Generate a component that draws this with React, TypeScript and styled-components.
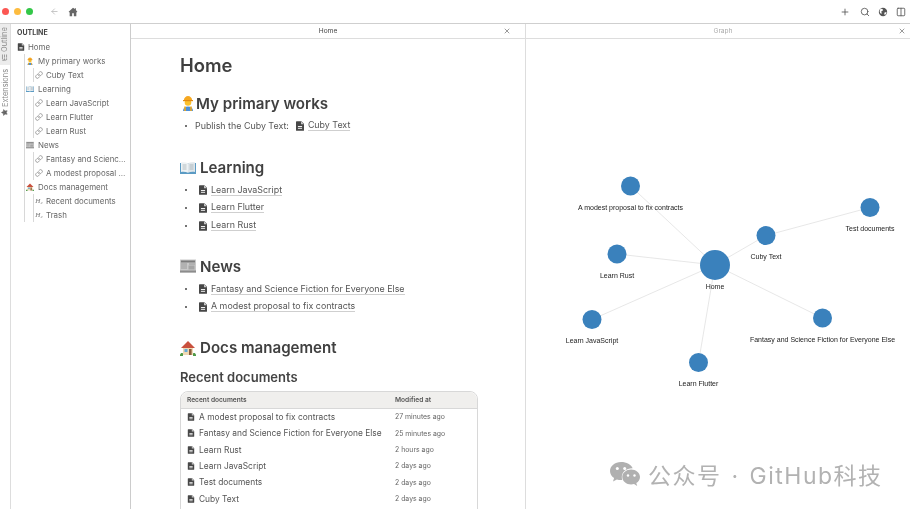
import React from "react";
import styled, { createGlobalStyle } from "styled-components";
import { ArrowLeft, Plus, Search, X, Link as LinkIcon, Columns2, Star, ListTree } from "lucide-react";

const GlobalStyle = createGlobalStyle`
  html, body { margin: 0; padding: 0; background: #fff; }
  body { font-family: Inter, "Noto Sans CJK SC", sans-serif; color: #4a4a4a; }
`;

const Page = styled.div`
  position: relative;
  width: 910px;
  height: 509px;
  overflow: hidden;
  display: flex;
  flex-direction: column;
  will-change: opacity;
`;

const TitleBar = styled.header`
  height: 23px;
  flex: none;
  display: flex;
  align-items: center;
  padding: 0 4px 0 2px;
  border-bottom: 1px solid #cfcfcf;
`;

const Light = styled.span<{ $color: string }>`
  width: 7px;
  height: 7px;
  border-radius: 50%;
  margin-right: 5px;
  background: ${(p) => p.$color};
`;

const NavGroup = styled.div`
  display: flex;
  align-items: center;
  gap: 9px;
  margin-left: 12px;
`;

const Actions = styled.div`
  margin-left: auto;
  display: flex;
  align-items: center;
  gap: 8px;
  color: #555;
`;

const PlusWrap = styled.span`
  display: flex;
  margin-right: 2px;
`;

const Body = styled.div`
  flex: 1;
  min-height: 0;
  display: flex;
`;

const Rail = styled.nav`
  width: 10px;
  flex: none;
  border-right: 1px solid #ddd;
  display: flex;
  flex-direction: column;
`;

const RailTab = styled.div<{ $active?: boolean; $h: number }>`
  height: ${(p) => p.$h}px;
  background: ${(p) => (p.$active ? "#ececec" : "transparent")};
  display: flex;
  align-items: center;
  justify-content: center;
  gap: 2px;
  writing-mode: vertical-rl;
  transform: rotate(180deg);
  font-size: 7.4px;
  color: #8a8a8a;
  margin-bottom: 3px;
`;

const RailIcon = styled.span`
  display: flex;
  color: #666;
  transform: rotate(90deg);
`;

const Sidebar = styled.aside`
  width: 120px;
  flex: none;
  border-right: 1px solid #ccc;
  padding: 3px 3px 0 6px;
  box-sizing: border-box;
  overflow: hidden;
`;

const SideTitle = styled.div`
  font-size: 7px;
  font-weight: 700;
  color: #444;
  height: 13px;
  line-height: 11px;
`;

const SideRow = styled.div<{ $gap?: number }>`
  height: 14px;
  display: flex;
  align-items: center;
  gap: ${(p) => p.$gap ?? 3}px;
  font-size: 7.9px;
  color: #666;
  white-space: nowrap;
  min-width: 0;
`;

const SideLabel = styled.span`
  overflow: hidden;
  text-overflow: ellipsis;
  min-width: 0;
`;

const Guide = styled.div<{ $indent: number }>`
  margin-left: ${(p) => p.$indent}px;
  border-left: 1px solid #d8d8d8;
  padding-left: 1px;
`;

const HeadMark = styled.i`
  width: 8px;
  flex: none;
  font-family: "Liberation Serif", serif;
  font-size: 7px;
  color: #777;
  text-align: center;
`;

const LinkMark = styled(LinkIcon)`
  flex: none;
  color: #777;
`;

const Pane = styled.section<{ $w: number }>`
  width: ${(p) => p.$w}px;
  flex: none;
  display: flex;
  flex-direction: column;
  min-height: 0;
  border-right: 1px solid #ddd;
  &:last-of-type { border-right: 0; }
`;

const TabBar = styled.div<{ $shift?: number }>`
  position: relative;
  height: 14px;
  flex: none;
  border-bottom: 1px solid #ddd;
  display: flex;
  align-items: center;
  justify-content: center;
  padding-left: ${(p) => p.$shift ?? 0}px;
  font-size: 6.6px;
`;

const TabTitle = styled.span<{ $dim?: boolean }>`
  color: ${(p) => (p.$dim ? "#aaa" : "#444")};
`;

const TabClose = styled.span<{ $right: number }>`
  position: absolute;
  right: ${(p) => p.$right}px;
  top: 3px;
  display: flex;
  color: #666;
`;

const Doc = styled.article`
  flex: 1;
  min-height: 0;
  overflow: hidden;
  padding: 14px 48px 0 49px;
`;

const H1 = styled.h1`
  margin: 0 0 14px;
  font-size: 18.4px;
  line-height: 24px;
  font-weight: 600;
  color: #3f3f3f;
`;

const H2 = styled.h2<{ $gap?: number }>`
  margin: 0 0 2px;
  height: 24px;
  display: flex;
  align-items: center;
  gap: ${(p) => p.$gap ?? 4}px;
  font-size: 15.1px;
  font-weight: 600;
  color: #404040;
`;

const Section = styled.section<{ $after: number }>`
  margin-bottom: ${(p) => p.$after}px;
`;

const Item = styled.div`
  height: 17.6px;
  display: flex;
  align-items: center;
  font-size: 8.9px;
  color: #555;
  padding-left: 5px;
`;

const Bullet = styled.span`
  width: 2px;
  height: 2px;
  border-radius: 50%;
  background: #444;
  margin-right: 8px;
  flex: none;
`;

const DocLink = styled.span`
  border-bottom: 1px solid #cfcfcf;
  line-height: 10px;
  margin-left: 3px;
`;

const BulletIcon = styled.span<{ $left?: number }>`
  display: flex;
  margin-left: ${(p) => p.$left ?? 3}px;
`;

const H3 = styled.h3`
  margin: 8px 0 5px;
  font-size: 13px;
  line-height: 18px;
  font-weight: 600;
  color: #444;
`;

const Table = styled.div`
  width: 298px;
  min-height: 140px;
  border: 1px solid #d8d8d8;
  border-radius: 8px 8px 0 0;
  box-sizing: border-box;
`;

const TableRow = styled.div<{ $head?: boolean }>`
  display: grid;
  grid-template-columns: 208px 1fr;
  align-items: center;
  height: ${(p) => (p.$head ? 17 : 16.4)}px;
  padding-left: 6px;
  background: ${(p) => (p.$head ? "#f0efed" : "transparent")};
  border-bottom: ${(p) => (p.$head ? "1px solid #d8d8d8" : "0")};
  border-radius: ${(p) => (p.$head ? "8px 8px 0 0" : "0")};
  box-sizing: border-box;
  font-size: ${(p) => (p.$head ? 6.6 : 8.4)}px;
  font-weight: ${(p) => (p.$head ? 600 : 400)};
  color: #555;
`;

const DocCell = styled.div`
  display: flex;
  align-items: center;
  gap: 4px;
  white-space: nowrap;
`;

const TimeCell = styled.div`
  font-size: 6.9px;
  color: #666;
`;

const Watermark = styled.div`
  position: absolute;
  left: 609px;
  top: 457px;
  display: flex;
  align-items: center;
  gap: 7px;
  font-size: 23px;
  letter-spacing: 1.5px;
  word-spacing: 2px;
  color: #b2b2b2;
  white-space: nowrap;
`;

const GraphWrap = styled.div`
  flex: 1;
  min-height: 0;
`;

const GraphSvg = styled.svg`
  display: block;
`;

const EmojiSvg = styled.svg`
  flex: none;
`;

const GraphLabel = styled.text`
  font-family: "Liberation Sans", sans-serif;
  font-size: 7px;
  fill: #222;
  text-anchor: middle;
`;

function DocIcon({ size = 10 }: { size?: number }) {
  return (
    <EmojiSvg width={size} height={size} viewBox="0 0 12 12">
      <path d="M2 .3h5.700L10.800 3.400V11a.8.8 0 0 1-.8.8H2a.8.8 0 0 1-.8-.8V1.100A.8.8 0 0 1 2 .3z" fill="#474747" />
      <path d="M7.200 .3v3.500h3.600z" fill="#fff" opacity=".7" />
      <rect x="3.500" y="6" width="5" height="1.100" fill="#fff" />
      <rect x="3.500" y="8.200" width="5" height="1.100" fill="#fff" />
    </EmojiSvg>
  );
}

function HomeGlyph() {
  return (
    <svg width="10" height="10" viewBox="0 0 12 12">
      <path d="M6 1 .8 5.800l.7.700L2 6v5h3V7.500h2V11h3V6l.5.500.7-.7L9.500 3.500V1.500H8.300v.9z" fill="#666" />
    </svg>
  );
}

function GlobeGlyph() {
  return (
    <svg width="10" height="10" viewBox="0 0 12 12">
      <circle cx="6" cy="6" r="5" fill="#555" />
      <path d="M3 2.200c1.400-.4 2.500 0 3 1 .3.800-.5 1.200-1.300 1.500-.8.400-1 1.300-.4 2 .4.600.2 1.500-.6 1.300C2 7.500 1.300 4.500 3 2.200zM8 6.500c.8-.4 1.800-.3 2.400.2-.3 1.300-1.200 2.400-2.200 2.900-.6-.9-.9-2.500-.2-3.100z" fill="#fff" />
    </svg>
  );
}

function Worker({ size }: { size: number }) {
  return (
    <EmojiSvg width={size} height={size} viewBox="0 0 16 16">
      <path d="M3 16c0-3 2-4.500 5-4.500s5 1.500 5 4.500z" fill="#4a90d9" />
      <path d="M5 11.500v4.500M11 11.500v4.500" stroke="#f2a81d" strokeWidth="1.600" />
      <circle cx="8" cy="7.500" r="3.300" fill="#fbc02d" />
      <path d="M3.800 5.500C4 2.500 6 1 8 1s4 1.500 4.200 4.500z" fill="#f6a821" />
      <rect x="3" y="5" width="10" height="1.200" fill="#e08a12" />
    </EmojiSvg>
  );
}

function Book({ size }: { size: number }) {
  return (
    <EmojiSvg width={size} height={size} viewBox="0 0 16 16">
      <rect x="0" y="3" width="16" height="11" fill="#5b9bc4" />
      <path d="M1 2.500c2.500-.5 5-.3 7 .8v9.500c-2-1-4.500-1.200-7-.8z" fill="#eef2f4" />
      <path d="M15 2.500c-2.500-.5-5-.3-7 .8v9.500c2-1 4.500-1.200 7-.8z" fill="#dfe6ea" />
      <path d="M2.500 5h4M2.500 7h4M2.500 9h4M9.500 5h4M9.500 7h4M9.500 9h4" stroke="#8d9aa3" strokeWidth=".6" />
    </EmojiSvg>
  );
}

function Paper({ size }: { size: number }) {
  return (
    <EmojiSvg width={size} height={size} viewBox="0 0 16 16">
      <rect x="0" y="1.500" width="16" height="13" fill="#c9c9c9" />
      <rect x="1" y="2.500" width="14" height="2" fill="#7c7c7c" />
      <path d="M1 6h6M1 8h6M1 10h6M9 6h6" stroke="#8f8f8f" strokeWidth=".8" />
      <rect x="8.500" y="7.500" width="6" height="4" fill="#a5a5a5" />
      <rect x="0" y="12.500" width="16" height="2" fill="#8c8c8c" />
    </EmojiSvg>
  );
}

function House({ size }: { size: number }) {
  return (
    <EmojiSvg width={size} height={size} viewBox="0 0 16 16">
      <rect x="3" y="7" width="10" height="8" fill="#efd9b4" />
      <path d="M8 1 1 8h14z" fill="#c9503d" />
      <rect x="4.500" y="9" width="3" height="3" fill="#62a9d9" />
      <rect x="9" y="9" width="2.600" height="6" fill="#8a5a3a" />
      <path d="M0 15c.5-2 2-2.500 3-1.500V16H0zM16 15c-.5-2-2-2.500-3-1.500V16h3z" fill="#4f9a48" />
    </EmojiSvg>
  );
}

function WeChatMark() {
  return (
    <svg width="32" height="26" viewBox="0 0 32 26">
      <path d="M12 1C5.900 1 1 5 1 10c0 2.900 1.600 5.400 4.100 7.100L4 20.500l3.900-2.100c1.300.4 2.700.6 4.100.6.400 0 .8 0 1.200-.1-.3-.9-.4-1.800-.4-2.800 0-4.900 4.600-8.800 10.300-8.800h.6C22.300 3.500 17.600 1 12 1z" fill="#b0b0b0" />
      <path d="M31 16c0-4.200-4.100-7.500-8.900-7.500S13.300 11.800 13.300 16s4.100 7.500 8.800 7.500c1 0 2-.1 2.900-.4l3.200 1.800-.9-2.800c2.200-1.400 3.700-3.600 3.700-6.100z" fill="#b0b0b0" />
      <circle cx="8.300" cy="7.500" r="1.500" fill="#fff" />
      <circle cx="15.700" cy="7.500" r="1.500" fill="#fff" />
      <circle cx="19" cy="14.500" r="1.200" fill="#fff" />
      <circle cx="25.500" cy="14.500" r="1.200" fill="#fff" />
    </svg>
  );
}

const nodes = [
  { id: "Home", x: 715, y: 265, r: 15, ly: 286 },
  { id: "A modest proposal to fix contracts", x: 630.5, y: 186, r: 9.5, ly: 207 },
  { id: "Test documents", x: 870, y: 207.5, r: 9.5, ly: 228.5 },
  { id: "Cuby Text", x: 766, y: 235.5, r: 9.5, ly: 256.5 },
  { id: "Learn Rust", x: 617, y: 254, r: 9.5, ly: 275 },
  { id: "Learn JavaScript", x: 592, y: 319.5, r: 9.5, ly: 340 },
  { id: "Learn Flutter", x: 698.5, y: 362.5, r: 9.5, ly: 383.5 },
  { id: "Fantasy and Science Fiction for Everyone Else", x: 822.5, y: 318, r: 9.5, ly: 339.5 },
];

const edges = [[0, 1], [0, 3], [3, 2], [0, 4], [0, 5], [0, 6], [0, 7]];

function Graph() {
  return (
    <GraphSvg width="384" height="470" viewBox="526 39 384 470">
      {edges.map(([a, b]) => (
        <line key={`${a}-${b}`} x1={nodes[a].x} y1={nodes[a].y} x2={nodes[b].x} y2={nodes[b].y} stroke="#e4e4e4" strokeWidth="0.9" />
      ))}
      {nodes.map((n) => (
        <g key={n.id}>
          <circle cx={n.x} cy={n.y} r={n.r} fill="#3a81bc" />
          <GraphLabel x={n.x} y={n.ly + 2.5}>{n.id}</GraphLabel>
        </g>
      ))}
    </GraphSvg>
  );
}

const recent = [
  ["A modest proposal to fix contracts", "27 minutes ago"],
  ["Fantasy and Science Fiction for Everyone Else", "25 minutes ago"],
  ["Learn Rust", "2 hours ago"],
  ["Learn JavaScript", "2 days ago"],
  ["Test documents", "2 days ago"],
  ["Cuby Text", "2 days ago"],
];

function Listed({ title }: { title: string }) {
  return (
    <Item>
      <Bullet />
      <BulletIcon><DocIcon /></BulletIcon>
      <DocLink>{title}</DocLink>
    </Item>
  );
}

function Outline({ links }: { links: string[] }) {
  return (
    <Guide $indent={7}>
      {links.map((l) => (
        <SideRow key={l}>
          <LinkMark size={8} strokeWidth={2} />
          <SideLabel>{l}</SideLabel>
        </SideRow>
      ))}
    </Guide>
  );
}

export default function App() {
  return (
    <Page>
      <GlobalStyle />
      <TitleBar>
        <Light $color="#fc5753" />
        <Light $color="#fdbc40" />
        <Light $color="#33c748" />
        <NavGroup>
          <ArrowLeft size={9} color="#b5b5b5" />
          <HomeGlyph />
        </NavGroup>
        <Actions>
          <PlusWrap><Plus size={10} /></PlusWrap>
          <Search size={10} />
          <GlobeGlyph />
          <Columns2 size={10} />
        </Actions>
      </TitleBar>
      <Body>
        <Rail>
          <RailTab $active $h={41}>
            <RailIcon><ListTree size={7} /></RailIcon>
            Outline
          </RailTab>
          <RailTab $h={48}>
            <RailIcon><Star size={7} fill="#666" /></RailIcon>
            Extensions
          </RailTab>
        </Rail>
        <Sidebar>
          <SideTitle>OUTLINE</SideTitle>
          <SideRow><DocIcon size={8} /><SideLabel>Home</SideLabel></SideRow>
          <Guide $indent={7}>
            <SideRow $gap={4}><Worker size={8} /><SideLabel>My primary works</SideLabel></SideRow>
            <Outline links={["Cuby Text"]} />
            <SideRow $gap={4}><Book size={8} /><SideLabel>Learning</SideLabel></SideRow>
            <Outline links={["Learn JavaScript", "Learn Flutter", "Learn Rust"]} />
            <SideRow $gap={4}><Paper size={8} /><SideLabel>News</SideLabel></SideRow>
            <Outline links={["Fantasy and Science Fiction for Everyone Else", "A modest proposal to fix contracts"]} />
            <SideRow $gap={4}><House size={8} /><SideLabel>Docs management</SideLabel></SideRow>
            <Guide $indent={7}>
              <SideRow><HeadMark>H₂</HeadMark><SideLabel>Recent documents</SideLabel></SideRow>
              <SideRow><HeadMark>H₂</HeadMark><SideLabel>Trash</SideLabel></SideRow>
            </Guide>
          </Guide>
        </Sidebar>
        <Pane $w={394}>
          <TabBar>
            <TabTitle>Home</TabTitle>
            <TabClose $right={14}><X size={8} /></TabClose>
          </TabBar>
          <Doc>
            <H1>Home</H1>
            <Section $after={21}>
              <H2 $gap={0}><Worker size={16} />My primary works</H2>
              <Item>
                <Bullet />
                Publish the Cuby Text:
                <BulletIcon $left={6}><DocIcon /></BulletIcon>
                <DocLink>Cuby Text</DocLink>
              </Item>
            </Section>
            <Section $after={20}>
              <H2><Book size={16} />Learning</H2>
              <Listed title="Learn JavaScript" />
              <Listed title="Learn Flutter" />
              <Listed title="Learn Rust" />
            </Section>
            <Section $after={20}>
              <H2><Paper size={16} />News</H2>
              <Listed title="Fantasy and Science Fiction for Everyone Else" />
              <Listed title="A modest proposal to fix contracts" />
            </Section>
            <H2><House size={16} />Docs management</H2>
            <H3>Recent documents</H3>
            <Table>
              <TableRow $head>
                <span>Recent documents</span>
                <span>Modified at</span>
              </TableRow>
              {recent.map(([name, when]) => (
                <TableRow key={name}>
                  <DocCell><DocIcon size={8} />{name}</DocCell>
                  <TimeCell>{when}</TimeCell>
                </TableRow>
              ))}
            </Table>
          </Doc>
        </Pane>
        <Pane $w={384}>
          <TabBar $shift={10}>
            <TabTitle $dim>Graph</TabTitle>
            <TabClose $right={4}><X size={8} /></TabClose>
          </TabBar>
          <GraphWrap><Graph /></GraphWrap>
        </Pane>
      </Body>
      <Watermark>
        <WeChatMark />
        <span>公众号 · GitHub科技</span>
      </Watermark>
    </Page>
  );
}
